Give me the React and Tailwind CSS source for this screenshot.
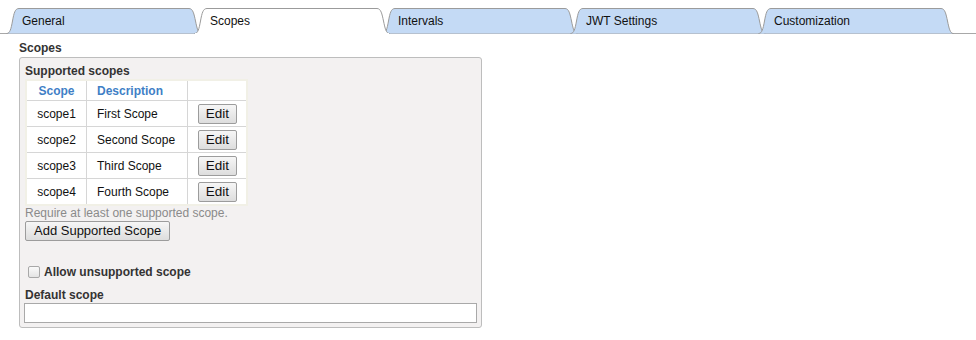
const tabs = ["General", "Scopes", "Intervals", "JWT Settings", "Customization"];
const scopes = [
  { name: "scope1", description: "First Scope" },
  { name: "scope2", description: "Second Scope" },
  { name: "scope3", description: "Third Scope" },
  { name: "scope4", description: "Fourth Scope" },
];

function Tab({ label, active, first }) {
  return (
    <div
      className={`relative h-[26px] w-[196px] shrink-0 ${first ? "" : "-ml-[8px]"} ${
        active ? "z-10" : ""
      }`}
    >
      <svg
        className="absolute left-0 top-0"
        width="196"
        height="27"
        viewBox="0 0 196 27"
      >
        <path
          d="M0.5,25.5 C4,25.5 5,21 6.5,13 S9,0.5 13,0.5 L183,0.5 C187,0.5 188,6 189.5,13 S192,25.5 195.5,25.5"
          fill={active ? "#ffffff" : "#c4daf5"}
          stroke="#9b9b9b"
          strokeWidth="1"
        />
        {active && <rect x="1" y="25" width="194" height="2" fill="#ffffff" />}
      </svg>
      <div className="relative pl-[16px] pt-[6px] text-[12px] leading-[15px] text-[#111]">
        {label}
      </div>
    </div>
  );
}

function Button({ children, className = "" }) {
  return (
    <button
      className={`h-[20px] rounded-[2px] border border-[#9c9c9c] bg-gradient-to-b from-[#f6f6f6] to-[#dddddd] leading-[18px] text-[#111] ${className}`}
    >
      {children}
    </button>
  );
}

export default function App() {
  return (
    <div className="h-[340px] w-[976px] bg-white font-['Liberation_Sans',Arial,sans-serif] text-[12px]">
      <div className="flex h-[34px] border-b border-[#a8a8a8] pl-[6px] pt-[8px]">
        {tabs.map((t, i) => (
          <Tab key={t} label={t} active={t === "Scopes"} first={i === 0} />
        ))}
      </div>

      <div className="pl-[19px] pt-[7px]">
        <div className="text-[12px] font-bold leading-[15px] text-[#333]">Scopes</div>
        <div className="mt-[1px] w-[463px] rounded-[3px] border border-[#bdbdbd] bg-[#f3f1f1] px-[5px] pb-[4px] pt-[6px]">
          <div className="font-bold leading-[14px] text-[#333]">Supported scopes</div>
          <table className="mt-[1px] border-separate border-spacing-0 border-[2px] border-[#f1f0e6] bg-[#f1f0e6]">
            <thead>
              <tr className="h-[19px] bg-white">
                <th className="w-[60px] border-r border-[#d6d6d6] text-center font-bold text-[#3f7fc6]">
                  Scope
                </th>
                <th className="w-[101px] border-r border-[#d6d6d6] pl-[10px] text-left font-bold text-[#3f7fc6]">
                  Description
                </th>
                <th className="w-[58px]"></th>
              </tr>
            </thead>
            <tbody>
              {scopes.map((s) => (
                <tr key={s.name} className="h-[26px] bg-white">
                  <td className="border-r border-t border-[#d6d6d6] text-center text-[#111]">
                    {s.name}
                  </td>
                  <td className="border-r border-t border-[#d6d6d6] pl-[10px] text-[#111]">
                    {s.description}
                  </td>
                  <td className="border-t border-[#d6d6d6] pl-[10px]">
                    <Button className="block w-[39px] text-[13.5px]">Edit</Button>
                  </td>
                </tr>
              ))}
            </tbody>
          </table>
          <div className="leading-[14px] text-[#8a8a8a]">
            Require at least one supported scope.
          </div>
          <Button className="mt-[1px] px-[8px] text-[13px]">Add Supported Scope</Button>
          <label className="mt-[22px] flex items-center gap-[4px] pl-[3px]">
            <span className="inline-block h-[12px] w-[12px] rounded-[2px] border border-[#a8a8a8] bg-gradient-to-b from-[#fafafa] to-[#e4e4e4]"></span>
            <span className="font-bold text-[#333]">Allow unsupported scope</span>
          </label>
          <div className="mt-[7px] font-bold leading-[14px] text-[#333]">Default scope</div>
          <input
            type="text"
            className="-ml-[1px] mt-[1px] block h-[20px] w-[453px] border border-[#a9a9a9] bg-white outline-none"
          />
        </div>
      </div>
    </div>
  );
}
